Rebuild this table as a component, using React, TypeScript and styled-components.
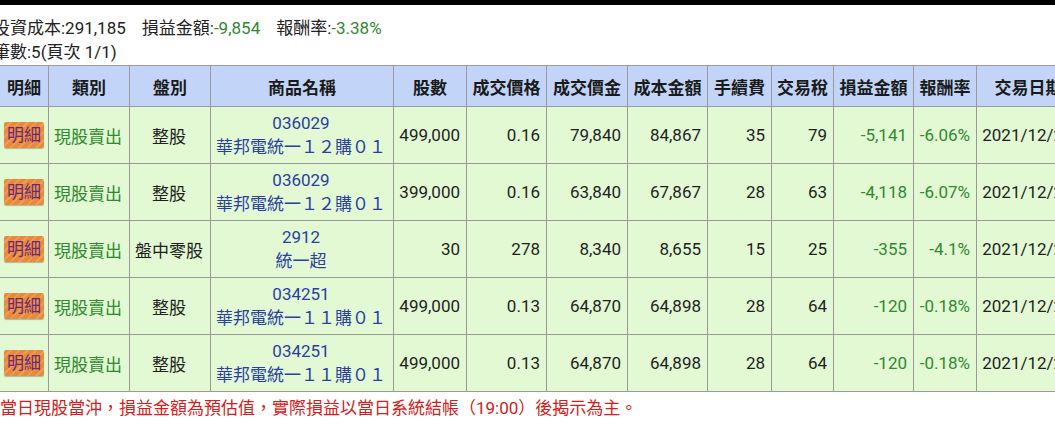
import React from "react";
import styled, { createGlobalStyle } from "styled-components";

const GlobalStyle = createGlobalStyle`
  html, body {
    margin: 0;
    padding: 0;
    background: #ffffff;
    overflow: hidden;
  }
  body {
    font-family: Roboto, "Noto Sans CJK TC", "Noto Sans", sans-serif;
    font-size: 17px;
    color: #222;
  }
`;

const rows = [
  {
    market: "整股",
    code: "036029",
    name: "華邦電統一１２購０１",
    qty: "499,000",
    price: "0.16",
    amount: "79,840",
    cost: "84,867",
    fee: "35",
    tax: "79",
    pl: "-5,141",
    rate: "-6.06%",
  },
  {
    market: "整股",
    code: "036029",
    name: "華邦電統一１２購０１",
    qty: "399,000",
    price: "0.16",
    amount: "63,840",
    cost: "67,867",
    fee: "28",
    tax: "63",
    pl: "-4,118",
    rate: "-6.07%",
  },
  {
    market: "盤中零股",
    code: "2912",
    name: "統一超",
    qty: "30",
    price: "278",
    amount: "8,340",
    cost: "8,655",
    fee: "15",
    tax: "25",
    pl: "-355",
    rate: "-4.1%",
  },
  {
    market: "整股",
    code: "034251",
    name: "華邦電統一１１購０１",
    qty: "499,000",
    price: "0.13",
    amount: "64,870",
    cost: "64,898",
    fee: "28",
    tax: "64",
    pl: "-120",
    rate: "-0.18%",
  },
  {
    market: "整股",
    code: "034251",
    name: "華邦電統一１１購０１",
    qty: "499,000",
    price: "0.13",
    amount: "64,870",
    cost: "64,898",
    fee: "28",
    tax: "64",
    pl: "-120",
    rate: "-0.18%",
  },
];

// 欄寬 (px)
const cols = [49, 81, 81, 183, 73, 80, 81, 80, 64, 62, 80, 63, 104];
const heads = ["明細", "類別", "盤別", "商品名稱", "股數", "成交價格", "成交價金", "成本金額", "手續費", "交易稅", "損益金額", "報酬率", "交易日期"];

const Page = styled.div`
  width: 1055px;
  height: 430px;
  overflow: hidden;
`;

const TopBar = styled.div`
  height: 5px;
  background: #000;
`;

const Summary = styled.div`
  padding-top: 11px;
  margin-left: -7px;
`;

const Line = styled.div`
  height: 24px;
  line-height: 24px;
  white-space: nowrap;
`;

const Group = styled.span`
  margin-right: 16px;
`;

const Green = styled.span`
  color: #2f8a2f;
`;

const Table = styled.table`
  margin: 1px 0 0 -1px;
  border-collapse: collapse;
  table-layout: fixed;
  width: ${cols.reduce((a, b) => a + b, 0)}px;
`;

const Col = styled.col<{ $w: number }>`
  width: ${(p) => p.$w}px;
`;

const Th = styled.th`
  height: 40px;
  padding: 0;
  background: #c2d5f8;
  border: 1px solid #9a9a9a;
  font-weight: 700;
  text-align: center;
  white-space: nowrap;
  color: #1a1a1a;
`;

const Td = styled.td<{ $align?: string; $color?: string; $flush?: boolean }>`
  height: 56px;
  padding: ${(p) => (p.$flush ? "0" : "0 6px 0 4px")};
  background: #e2f9d4;
  border: 1px solid #9a9a9a;
  text-align: ${(p) => p.$align || "right"};
  color: ${(p) => p.$color || "#1f1f1f"};
  white-space: nowrap;
  overflow: hidden;
`;

const DetailBtn = styled.span`
  display: inline-block;
  width: 40px;
  height: 26px;
  line-height: 26px;
  text-align: center;
  color: #6b2877;
  border-radius: 2px;
  background: repeating-linear-gradient(
    135deg,
    #e88a3c 0px,
    #e88a3c 4px,
    #ef9c55 4px,
    #ef9c55 6px
  );
  box-shadow: 0 1px 1px rgba(0, 0, 0, 0.25);
`;

const ProductLine = styled.div`
  color: #2b3ea3;
  line-height: 24px;
`;

const Footer = styled.div`
  margin-top: 4px;
  color: #d22020;
  white-space: nowrap;
  line-height: 24px;
`;

export default function App() {
  return (
    <>
      <GlobalStyle />
      <Page>
        <TopBar />
        <Summary>
          <Line>
            <Group>投資成本:291,185</Group>
            <Group>
              損益金額:<Green>-9,854</Green>
            </Group>
            <Group>
              報酬率:<Green>-3.38%</Green>
            </Group>
          </Line>
          <Line>筆數:5(頁次 1/1)</Line>
        </Summary>
        <Table>
          <colgroup>
            {cols.map((w, i) => (
              <Col key={i} $w={w} />
            ))}
          </colgroup>
          <thead>
            <tr>
              {heads.map((h) => (
                <Th key={h}>{h}</Th>
              ))}
            </tr>
          </thead>
          <tbody>
            {rows.map((r, i) => (
              <tr key={i}>
                <Td $align="center" $flush>
                  <DetailBtn>明細</DetailBtn>
                </Td>
                <Td $align="center" $color="#2f8a2f">
                  現股賣出
                </Td>
                <Td $align="center">{r.market}</Td>
                <Td $align="center">
                  <ProductLine>{r.code}</ProductLine>
                  <ProductLine>{r.name}</ProductLine>
                </Td>
                <Td>{r.qty}</Td>
                <Td>{r.price}</Td>
                <Td>{r.amount}</Td>
                <Td>{r.cost}</Td>
                <Td>{r.fee}</Td>
                <Td>{r.tax}</Td>
                <Td $color="#2f8a2f">{r.pl}</Td>
                <Td $color="#2f8a2f">{r.rate}</Td>
                <Td $align="center">2021/12/29</Td>
              </tr>
            ))}
          </tbody>
        </Table>
        <Footer>當日現股當沖，損益金額為預估值，實際損益以當日系統結帳（19:00）後揭示為主。</Footer>
      </Page>
    </>
  );
}
